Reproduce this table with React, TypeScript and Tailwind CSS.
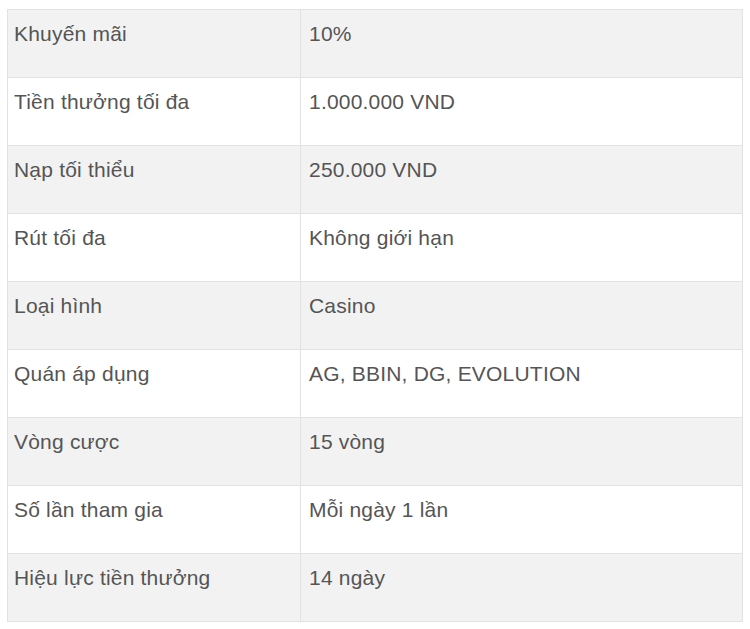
import React from "react";

const rows: [string, string][] = [
  ["Khuyến mãi", "10%"],
  ["Tiền thưởng tối đa", "1.000.000 VND"],
  ["Nạp tối thiểu", "250.000 VND"],
  ["Rút tối đa", "Không giới hạn"],
  ["Loại hình", "Casino"],
  ["Quán áp dụng", "AG, BBIN, DG, EVOLUTION"],
  ["Vòng cược", "15 vòng"],
  ["Số lần tham gia", "Mỗi ngày 1 lần"],
  ["Hiệu lực tiền thưởng", "14 ngày"],
];

export default function App() {
  return (
    <div className="w-[750px] h-[629px] bg-white pt-[9px] pl-[7px]" style={{ fontFamily: '"Liberation Sans", Arial, sans-serif' }}>
      <table className="border-collapse w-[736px] text-[21px] tracking-[0.2px] text-[#555555] leading-[24px]">
        <tbody>
          {rows.map(([a, b], i) => (
            <tr key={i} className={i % 2 === 0 ? "bg-[#f2f2f2]" : "bg-white"}>
              <td className="border border-[#e2e2e2] w-[293px] h-[68px] align-top pt-[12px] pl-[6px]">{a}</td>
              <td className="border border-[#e2e2e2] h-[68px] align-top pt-[12px] pl-[8px]">{b}</td>
            </tr>
          ))}
        </tbody>
      </table>
    </div>
  );
}
